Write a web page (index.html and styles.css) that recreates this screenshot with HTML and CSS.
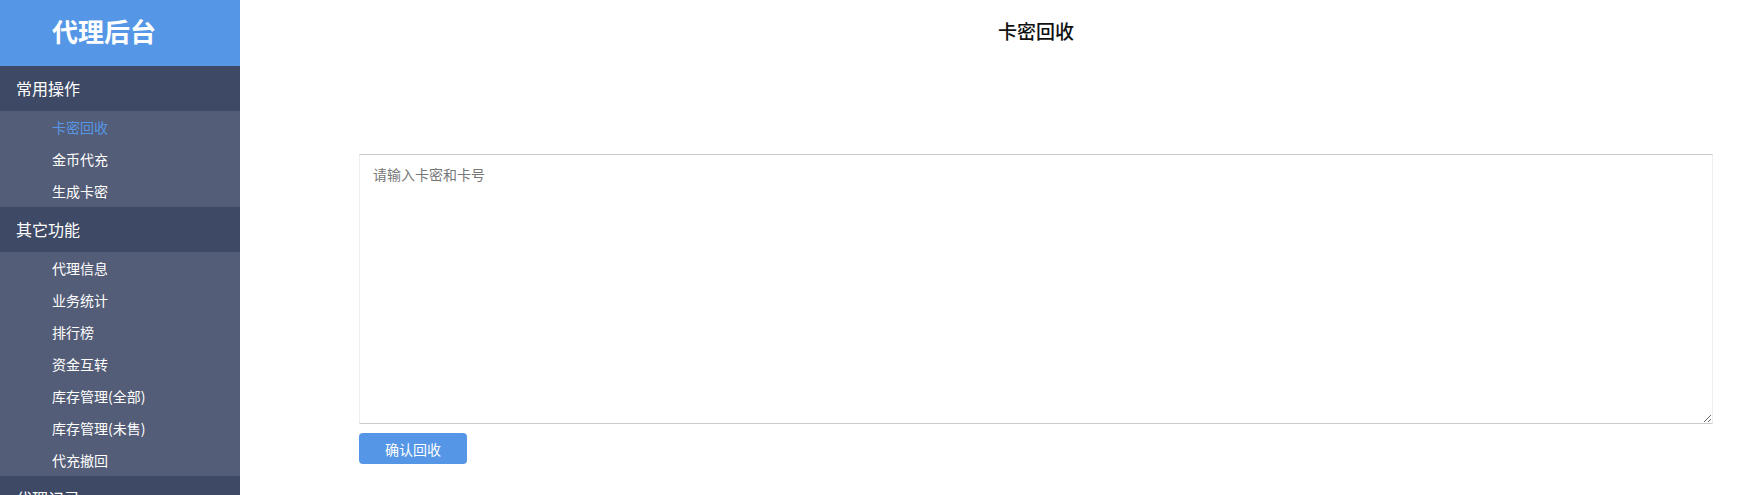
FILE: index.html
```html
<!DOCTYPE html>
<html lang="zh">
<head>
<meta charset="utf-8">
<title>卡密回收</title>
<link rel="stylesheet" href="styles.css">
</head>
<body>
<div class="layout">
  <aside class="sidebar">
    <div class="brand">代理后台</div>
    <div class="group-title">常用操作</div>
    <ul class="group-list">
      <li class="item active">卡密回收</li>
      <li class="item">金币代充</li>
      <li class="item">生成卡密</li>
    </ul>
    <div class="group-title">其它功能</div>
    <ul class="group-list">
      <li class="item">代理信息</li>
      <li class="item">业务统计</li>
      <li class="item">排行榜</li>
      <li class="item">资金互转</li>
      <li class="item">库存管理(全部)</li>
      <li class="item">库存管理(未售)</li>
      <li class="item">代充撤回</li>
    </ul>
    <div class="group-title">代理记录</div>
  </aside>
  <main class="main">
    <h1 class="page-title">卡密回收</h1>
    <textarea class="card-input" placeholder="请输入卡密和卡号"></textarea>
    <div class="actions">
      <button class="btn-primary" type="button">确认回收</button>
    </div>
  </main>
</div>
</body>
</html>
```
FILE: styles.css
```css
* { box-sizing: border-box; }
html, body {
  margin: 0;
  padding: 0;
  height: 100%;
  overflow: hidden;
  background: #fff;
  font-family: "Noto Sans CJK SC", "Noto Sans", sans-serif;
}
.layout {
  display: flex;
  height: 100vh;
}
.sidebar {
  width: 240px;
  flex: none;
  background: #3d4965;
  color: #fff;
  overflow: hidden;
}
.brand {
  height: 66px;
  background: #5597e6;
  font-size: 26px;
  font-weight: bold;
  line-height: 62px;
  padding-left: 52px;
}
.group-title {
  height: 45px;
  line-height: 44px;
  padding-left: 16px;
  font-size: 16px;
  background: #3d4965;
}
.group-list {
  list-style: none;
  margin: 0;
  padding: 0;
  background: #545d77;
}
.item {
  height: 32px;
  line-height: 32px;
  padding-left: 52px;
  font-size: 14px;
  color: #fff;
}
.item.active { color: #5597e6; }
.main {
  flex: 1;
  padding: 0 28px 0 119px;
  display: flex;
  flex-direction: column;
}
.page-title {
  margin: 0;
  height: 62px;
  line-height: 62px;
  font-size: 19px;
  font-weight: 500;
  color: #111;
  text-align: center;
}
.card-input {
  margin-top: 92px;
  width: 100%;
  height: 270px;
  border: 1px solid #eeeeee;
  border-top-color: #cccccc;
  border-bottom-color: #cccccc;
  padding: 9px 13px;
  font-family: inherit;
  font-size: 14px;
  line-height: 20px;
  color: #333;
  resize: vertical;
  outline: none;
}
.card-input::placeholder { color: #777; }
.actions {
  margin-top: 9px;
}
.btn-primary {
  width: 108px;
  height: 31px;
  border: none;
  border-radius: 4px;
  background: #5597e6;
  color: #fff;
  font-family: inherit;
  font-size: 14px;
  padding: 0;
  cursor: pointer;
}
```
